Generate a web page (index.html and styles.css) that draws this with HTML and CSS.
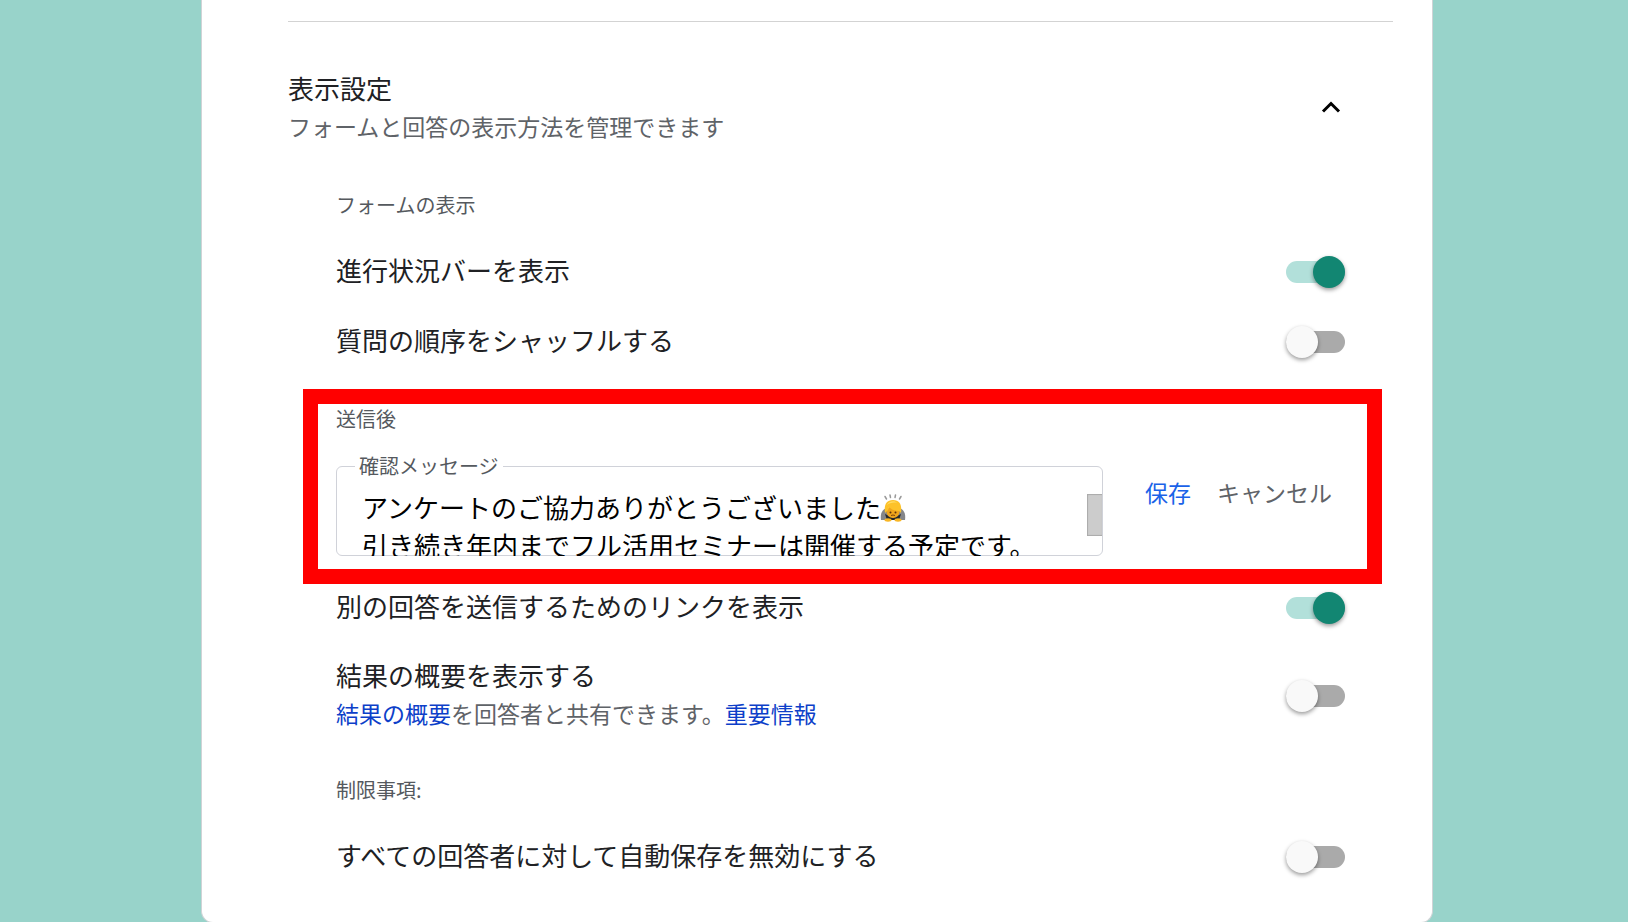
FILE: index.html
```
<!DOCTYPE html>
<html lang="ja">
<head>
<meta charset="utf-8">
<title>表示設定</title>
<link rel="stylesheet" href="styles.css">
</head>
<body>
  <main class="card">
    <hr class="divider">

    <div class="header">
      <div>
        <h1 class="title">表示設定</h1>
        <p class="desc">フォームと回答の表示方法を管理できます</p>
      </div>
      <button class="collapse" type="button" aria-label="折りたたむ">
        <svg width="20" height="12" viewBox="0 0 20 12"><path d="M2 10.5 L10 2.5 L18 10.5" fill="none" stroke="#000" stroke-width="3"/></svg>
      </button>
    </div>

    <section class="settings">
      <h2 class="label">フォームの表示</h2>
      <div class="row">
        <label class="name" for="progress">進行状況バーを表示</label>
        <input class="toggle" id="progress" type="checkbox" checked>
      </div>
      <div class="row">
        <label class="name" for="shuffle">質問の順序をシャッフルする</label>
        <input class="toggle" id="shuffle" type="checkbox">
      </div>

      <div class="highlight">
        <h2 class="label">送信後</h2>
        <div class="message">
          <div class="field">
            <label class="legend" for="confirm">確認メッセージ</label>
            <textarea class="text" id="confirm">アンケートのご協力ありがとうございました
引き続き年内までフル活用セミナーは開催する予定です。</textarea>
            <svg class="bow" width="26" height="28" viewBox="0 0 26 28">
              <g stroke="#999" stroke-width="1.5" stroke-linecap="round">
                <path d="M5 2.5 L6.5 5M10 1 L10.5 3.5M15.5 1 L15 3.5M21 2.5 L19.5 5"/>
              </g>
              <path d="M1 26 C0 20 2 15 7 14 L19 14 C24 15 26 20 25 26 Z" fill="#858689"/>
              <path d="M5 20 L13 24 L21 20 L19 26 L7 26 Z" fill="#25272b"/>
              <ellipse cx="13" cy="18" rx="6.5" ry="6" fill="#f0a51b"/>
              <path d="M5 19 C4 11 6 6 13 6 C20 6 22 11 21 19 L19 17 C15 17 12 16 9 13 C9 16 7 17 5 19 Z" fill="#fdc229"/>
              <path d="M7 11 C8 7 15 6 17 9 C14 8 9 9 7 11 Z" fill="#ffdc63"/>
              <circle cx="10.5" cy="18.5" r="1" fill="#60330b"/>
              <circle cx="15.5" cy="18.5" r="1" fill="#60330b"/>
              <path d="M11 21.5 Q13 20.5 15 21.5" fill="none" stroke="#7d430d"/>
              <ellipse cx="8" cy="26" rx="3.5" ry="1.7" fill="#f8b625"/>
              <ellipse cx="18" cy="26" rx="3.5" ry="1.7" fill="#f8b625"/>
            </svg>
            <span class="thumb"></span>
          </div>
          <div class="actions">
            <button class="btn save" type="button">保存</button>
            <button class="btn" type="button">キャンセル</button>
          </div>
        </div>
      </div>

      <div class="row">
        <label class="name" for="again">別の回答を送信するためのリンクを表示</label>
        <input class="toggle" id="again" type="checkbox" checked>
      </div>
      <div class="row tall">
        <div class="info">
          <label class="name" for="summary">結果の概要を表示する</label>
          <p class="desc"><a class="link" href="#">結果の概要</a>を回答者と共有できます。<a class="link" href="#">重要情報</a></p>
        </div>
        <input class="toggle" id="summary" type="checkbox">
      </div>

      <h2 class="label">制限事項:</h2>
      <div class="row">
        <label class="name" for="autosave">すべての回答者に対して自動保存を無効にする</label>
        <input class="toggle" id="autosave" type="checkbox">
      </div>
    </section>
  </main>
</body>
</html>
```
FILE: styles.css
```
* {
  box-sizing: border-box;
}

body {
  margin: 0;
  padding: 0 195px 0 201px;
  background: #98d3ca;
  font-family: "Noto Sans CJK JP", sans-serif;
  color: #202124;
}

h1, h2, p {
  margin: 0;
  font-weight: 400;
}

.card {
  padding: 21px 39px 30px 86px;
  background: #fff;
  border: 1px solid #d0d3d6;
  border-top: 0;
  border-radius: 0 0 12px 12px;
}

.divider {
  height: 1px;
  margin: 0;
  border: 0;
  background: #d3d3d3;
}

.header {
  display: flex;
  align-items: center;
  justify-content: space-between;
  padding: 47px 48px 18px 0;
}

.title, .name {
  display: block;
  font-size: 26px;
  line-height: 38px;
}

.desc {
  font-size: 23px;
  line-height: 38px;
  color: #5f6368;
}

.collapse {
  display: flex;
  align-items: center;
  justify-content: center;
  width: 28px;
  height: 38px;
  padding: 0;
  border: 0;
  background: none;
  cursor: pointer;
}

.settings {
  padding: 0 48px;
}

.label {
  padding: 30px 0 20px;
  font-size: 20px;
  line-height: 24px;
  color: #55595e;
}

.row {
  display: flex;
  align-items: center;
  justify-content: space-between;
  height: 70px;
}

.row.tall {
  height: 105px;
}

.row > .name, .info {
  padding-bottom: 4px;
}

/* switches */
.toggle {
  appearance: none;
  flex: none;
  display: flex;
  align-items: center;
  width: 59px;
  height: 22px;
  margin: 0;
  border-radius: 11px;
  background: #aaa;
  cursor: pointer;
}

.toggle::before {
  content: "";
  width: 32px;
  height: 32px;
  border-radius: 50%;
  background: #f9f9f9;
  box-shadow: 0 2px 4px rgba(0, 0, 0, 0.4);
}

.toggle:checked {
  justify-content: flex-end;
  background: #b2e0da;
}

.toggle:checked::before {
  background: #128672;
}

/* confirmation message */
.highlight {
  position: relative;
  padding-bottom: 17px;
}

.highlight::after {
  content: "";
  position: absolute;
  inset: 12px -37px -11px -33px;
  border: 15px solid #f00;
  pointer-events: none;
}

.message {
  display: flex;
  align-items: flex-start;
  gap: 42px;
  padding: 15px 13px 0 0;
}

.field {
  position: relative;
  flex: 1;
  height: 90px;
  border: 1px solid #d0d2d9;
  border-radius: 6px;
}

.legend {
  position: absolute;
  top: -13px;
  left: 18px;
  padding: 0 4px;
  background: #fff;
  font-size: 20px;
  line-height: 24px;
  color: #55595e;
}

.text {
  display: block;
  width: 100%;
  height: 89px;
  padding: 21px 16px 0 25px;
  border: 0;
  outline: 0;
  background: none;
  resize: none;
  overflow: hidden;
  font: 26px/38px "Noto Sans CJK JP", sans-serif;
  color: #000;
}

.bow {
  position: absolute;
  top: 27px;
  left: 543px;
}

.thumb {
  position: absolute;
  top: 27px;
  right: 0;
  width: 15px;
  height: 42px;
  background: #ccc;
  box-shadow: inset 1px 1px 1px #aaa, inset 0 -1px 1px #aaa;
}

.actions {
  display: flex;
  gap: 26px;
  padding-top: 7px;
}

.btn {
  padding: 0;
  border: 0;
  background: none;
  font: 23px/38px "Noto Sans CJK JP", sans-serif;
  color: #5f6368;
  cursor: pointer;
}

.save {
  color: #1a62e8;
}

.link {
  color: #0d3fc9;
  text-decoration: none;
}
```
